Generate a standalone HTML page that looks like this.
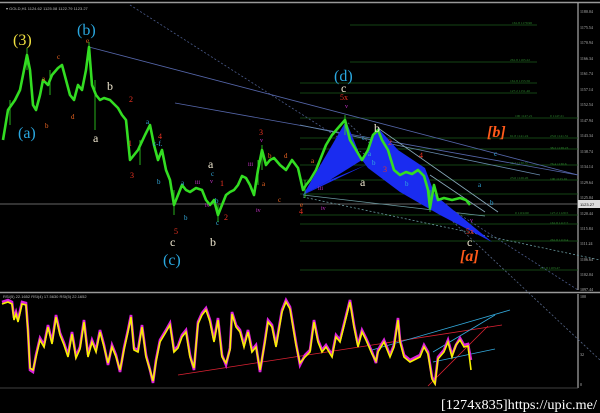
<!DOCTYPE html>
<html><head><style>
html,body{margin:0;padding:0;background:#000;width:600px;height:413px;overflow:hidden}
svg{display:block}
text{font-family:"Liberation Serif",serif}
.ax{font-family:"Liberation Sans",sans-serif;font-size:4px;fill:#bbb}
.fb{font-family:"Liberation Sans",sans-serif;font-size:3.5px;fill:#2e8b2e}
</style></head><body>
<svg width="600" height="413" viewBox="0 0 600 413" xmlns="http://www.w3.org/2000/svg">
<rect width="600" height="413" fill="#000"/>
<line x1="0" y1="2.5" x2="600" y2="2.5" stroke="#999" stroke-width="1.5"/>
<line x1="578" y1="3" x2="578" y2="290" stroke="#ccc" stroke-width="1"/>
<line x1="0" y1="292.5" x2="600" y2="292.5" stroke="#999" stroke-width="1.5"/>
<line x1="578" y1="294" x2="578" y2="388" stroke="#ccc" stroke-width="1"/>
<line x1="0" y1="388" x2="578" y2="388" stroke="#555" stroke-width="0.8"/>
<line x1="0" y1="204" x2="578" y2="204" stroke="#888" stroke-width="0.8"/>
<rect x="578" y="200" width="22" height="8" fill="#ddd"/>
<text x="580" y="206" class="ax" style="fill:#000">1123.27</text>
<text x="6" y="10" class="ax">▾ GOLD,H1  1124.62 1125.08 1122.79 1123.27</text>
<g stroke="#1d5d1d" stroke-width="0.7">
<line x1="350" y1="25" x2="537" y2="25"/><line x1="350" y1="62" x2="537" y2="62"/>
<line x1="300" y1="83" x2="537" y2="83"/><line x1="300" y1="93" x2="537" y2="93"/>
<line x1="300" y1="118" x2="578" y2="118"/><line x1="300" y1="138" x2="578" y2="138"/>
<line x1="300" y1="149" x2="578" y2="149"/><line x1="300" y1="165" x2="578" y2="165"/>
<line x1="300" y1="180" x2="578" y2="180"/><line x1="300" y1="194" x2="578" y2="194"/>
<line x1="300" y1="215" x2="578" y2="215"/><line x1="300" y1="224" x2="578" y2="224"/>
<line x1="300" y1="241" x2="578" y2="241"/><line x1="300" y1="270" x2="578" y2="270"/>
</g>
<g class="fb">
<text x="512" y="24">161.8 1179.96</text><text x="510" y="61">261.8 1165.22</text>
<text x="510" y="82">161.8 1155.56</text><text x="510" y="92">127.2 1151.46</text>
<text x="515" y="117">100 1147.21</text><text x="510" y="137">61.8 1141.24</text>
<text x="510" y="164">38.2 1130.37</text><text x="510" y="179">23.6 1126.26</text>
<text x="515" y="214">0 1119.60</text><text x="540" y="269">261.8 1103.47</text>
<text x="550" y="117">0 1147.21</text><text x="550" y="137">23.6 1141.31</text>
<text x="550" y="149">38.2 1138.23</text><text x="550" y="165">76.4 1130.6</text>
<text x="550" y="180">100 1125.91</text><text x="550" y="214">127.2 1120.5</text>
<text x="550" y="224">161.8 1117.7</text><text x="550" y="241">261.8 1110.4</text>
</g>
<g class="ax">
<text x="580" y="13">1180.04</text><text x="580" y="29">1175.54</text><text x="580" y="44">1170.94</text>
<text x="580" y="60">1166.34</text><text x="580" y="75">1161.74</text><text x="580" y="91">1157.14</text>
<text x="580" y="106">1152.54</text><text x="580" y="122">1147.94</text><text x="580" y="137">1143.34</text>
<text x="580" y="153">1138.74</text><text x="580" y="168">1134.14</text><text x="580" y="184">1129.64</text>
<text x="580" y="199">1125.04</text><text x="580" y="215">1120.44</text><text x="580" y="230">1115.84</text>
<text x="580" y="245">1111.24</text><text x="580" y="261">1106.64</text><text x="580" y="276">1102.04</text>
<text x="580" y="291">1097.44</text><text x="580" y="298">100</text><text x="580" y="356">32</text><text x="580" y="386">0</text>
</g>
<g fill="none" stroke-width="0.8">
<line x1="130" y1="5" x2="578" y2="290" stroke="#4a5a8a" stroke-dasharray="2,2"/>
<line x1="89" y1="47" x2="578" y2="175" stroke="#5566aa"/>
<line x1="175" y1="103" x2="578" y2="175" stroke="#5566aa"/>
<line x1="300" y1="125" x2="540" y2="175" stroke="#6688aa"/>
<line x1="303" y1="195" x2="485" y2="216" stroke="#6a9aa0"/>
<line x1="303" y1="197" x2="600" y2="260" stroke="#6a9aa0" stroke-dasharray="2,2"/>
<line x1="378" y1="128" x2="498" y2="212" stroke="#88aabb"/>
<line x1="345" y1="120" x2="600" y2="360" stroke="#556688" stroke-dasharray="2,2"/>
<line x1="430" y1="175" x2="485" y2="212" stroke="#88aabb"/>
</g>
<polygon points="303,195 346,121 362,160 330,180" fill="#1a2cf0"/>
<polygon points="303,195 330,180 366,165" fill="#1a2cf0"/>
<polygon points="362,160 378,128 398,150 425,168 435,195 492,242 440,215 400,192 368,168" fill="#1a2cf0"/>
<g fill="none" stroke="#33dd22" stroke-linejoin="round">
<polyline stroke-width="2.6" points="3,140 8,110 15,100 20,90 27,55 30,70 33,105 36,110 40,95 43,80 48,85 52,75 58,68 62,65 66,80 70,95 74,100 78,85 82,90 86,70 89,47 92,85 96,95 100,100 104,98 110,100 114,104 118,108 122,115 126,120 130,160 134,155 138,150 145,135 150,125 154,145 158,160 162,150 166,170 170,180 174,205 178,195 182,185 186,190 190,192 196,188 202,190 206,200 210,205 214,200 218,215 222,205 226,195 230,192 234,190 238,185 242,176 246,178 250,185 254,195 258,170 262,150 266,165 270,160 274,158 280,165 286,170 292,160 298,168 303,190 306,185 310,180 316,170 320,160 326,145 332,135 338,128 345,120 350,140 356,150 362,160 368,150 373,135 378,130 382,140 388,150 394,170 400,175 406,172 412,174 418,170 424,176 428,190 430,208 434,185 438,200 444,198 452,200 460,198 466,200 470,205"/>
</g>
<g stroke="#33dd22" stroke-width="0.8">
<line x1="27" y1="48" x2="27" y2="70"/><line x1="89" y1="42" x2="89" y2="60"/><line x1="174" y1="190" x2="174" y2="215"/><line x1="262" y1="145" x2="262" y2="170"/><line x1="430" y1="190" x2="430" y2="212"/>
<line x1="10" y1="100" x2="10" y2="125"/><line x1="50" y1="70" x2="50" y2="95"/><line x1="95" y1="80" x2="95" y2="130"/><line x1="140" y1="140" x2="140" y2="165"/><line x1="218" y1="205" x2="218" y2="222"/><line x1="258" y1="160" x2="258" y2="185"/><line x1="345" y1="115" x2="345" y2="135"/><line x1="305" y1="180" x2="305" y2="198"/>
</g>
<g font-size="16">
<text x="13" y="45" fill="#f0e040">(3)</text>
<text x="77" y="35" fill="#2aa8e0">(b)</text>
<text x="18" y="138" fill="#2aa8e0">(a)</text>
<text x="163" y="265" fill="#2aa8e0">(c)</text>
<text x="334" y="81" fill="#2aa8e0">(d)</text>
</g>
<g font-size="12">
<text x="107" y="90" fill="#f0e8d0">b</text><text x="93" y="142" fill="#f0e8d0">a</text>
<text x="208" y="168" fill="#f0e8d0">a</text><text x="170" y="246" fill="#f0e8d0">c</text>
<text x="210" y="246" fill="#f0e8d0">b</text><text x="341" y="92" fill="#f0e8d0">c</text>
<text x="374" y="132" fill="#f0e8d0">b</text><text x="360" y="186" fill="#f0e8d0">a</text>
<text x="467" y="246" fill="#f0e8d0">c</text>
</g>
<g font-size="16" font-style="italic" font-weight="bold" fill="#ff5a1a">
<text x="487" y="137">[b]</text><text x="460" y="261">[a]</text>
</g>
<g font-size="8" fill="#ee3322">
<text x="128" y="146">1</text><text x="130" y="178">3</text><text x="129" y="102">2</text>
<text x="158" y="139">4</text><text x="174" y="234">5</text><text x="220" y="186">1</text>
<text x="224" y="220">2</text><text x="259" y="135">3</text><text x="299" y="214">4</text>
<text x="340" y="100">5x</text><text x="419" y="158">4</text><text x="466" y="234">5x</text>
<text x="388" y="145">2</text><text x="383" y="172">3</text>
</g>
<g font-size="7" fill="#ee6622">
<text x="42" y="81">a</text><text x="57" y="59">c</text><text x="45" y="128">b</text>
<text x="71" y="119">d</text><text x="86" y="43">e</text><text x="268" y="158">b</text>
<text x="284" y="158">d</text><text x="262" y="186">a</text><text x="278" y="202">c</text>
<text x="300" y="207">e</text><text x="311" y="163">a</text>
</g>
<g font-size="7" fill="#33aadd">
<text x="146" y="124">a</text><text x="153" y="146">c-f.</text><text x="157" y="184">b</text>
<text x="181" y="185">a</text><text x="184" y="220">b</text><text x="211" y="176">c</text>
<text x="215" y="203">b</text><text x="216" y="225">c</text><text x="368" y="156">a</text>
<text x="494" y="156">c</text><text x="478" y="187">a</text><text x="490" y="205">b</text>
<text x="362" y="140">c</text><text x="372" y="165">b</text><text x="405" y="186">b</text>
</g>
<g font-size="6" fill="#cc33cc">
<text x="195" y="184">iii</text><text x="210" y="183">v</text><text x="205" y="207">iv</text>
<text x="248" y="166">iii</text><text x="256" y="212">iv</text><text x="318" y="190">iii</text>
<text x="321" y="210">iv</text><text x="345" y="108">v</text><text x="260" y="142">v</text>
<text x="470" y="222">v</text>
</g>
<text x="3" y="298" class="ax">RSI(5) 22.1652  RSI(4) 17.5630  RSI(5) 22.1652</text>
<g fill="none" stroke-width="0.8">
<line x1="178" y1="375" x2="502" y2="325" stroke="#dd2233"/>
<line x1="428" y1="386" x2="488" y2="326" stroke="#dd2233"/>
<line x1="433" y1="352" x2="495" y2="315" stroke="#33aadd"/>
<line x1="372" y1="350" x2="510" y2="310" stroke="#33aadd"/>
<line x1="433" y1="362" x2="495" y2="349" stroke="#33aadd"/>
</g>
<polyline fill="none" stroke="#dd22dd" stroke-width="2.6" points="2,302 8,300 12,302 14,318 16,312 18,320 22,302 26,303 28,330 30,370 33,372 36,355 40,338 44,345 48,325 52,342 56,315 60,333 64,343 68,355 72,332 76,356 80,347 84,320 88,355 92,340 96,350 100,330 104,345 108,365 112,345 116,355 120,372 124,348 128,330 131,315 134,348 138,350 142,325 146,355 150,370 153,383 156,360 160,340 166,330 170,323 174,350 178,346 182,335 186,330 190,355 194,370 198,322 202,313 206,308 210,320 214,340 218,318 222,355 226,365 230,348 232,312 236,325 240,330 244,345 248,330 252,350 256,345 260,372 265,340 268,320 272,325 276,345 282,310 286,300 290,307 296,343 300,365 305,355 310,350 314,320 318,340 322,350 326,345 332,355 336,335 340,340 345,320 350,300 354,325 358,345 362,330 366,338 372,352 376,363 378,350 384,340 390,355 394,345 398,318 400,340 404,355 410,360 414,358 420,355 424,345 428,352 432,377 435,382 438,357 444,350 448,340 452,355 456,345 460,338 464,345 468,344 471,360"/>
<polyline fill="none" stroke="#f7f000" stroke-width="1.6" points="2,304 8,302 12,304 14,320 16,314 18,322 22,304 26,305 28,332 30,368 33,370 36,357 40,340 44,347 48,327 52,344 56,317 60,335 64,345 68,357 72,334 76,358 80,349 84,322 88,357 92,342 96,352 100,332 104,347 108,363 112,347 116,357 120,370 124,350 128,332 131,317 134,350 138,352 142,327 146,357 150,370 153,381 156,362 160,342 166,332 170,325 174,352 178,348 182,337 186,332 190,357 194,368 198,324 202,315 206,310 210,322 214,342 218,320 222,357 226,363 230,350 232,314 236,327 240,332 244,347 248,332 252,352 256,347 260,370 265,342 268,322 272,327 276,347 282,312 286,302 290,309 296,345 300,363 305,357 310,352 314,322 318,342 322,352 326,347 332,357 336,337 340,342 345,322 350,302 354,327 358,347 362,332 366,340 372,354 376,361 378,352 384,342 390,357 394,347 398,320 400,342 404,357 410,362 414,360 420,357 424,347 428,354 432,379 435,384 438,359 444,352 448,342 452,357 456,345 460,340 464,347 468,346 471,370"/>
<text x="441" y="409" font-family="Liberation Sans,sans-serif" font-size="14" fill="#fff" textLength="156" lengthAdjust="spacingAndGlyphs">[1274x835]https://upic.me/</text>
</svg>
</body></html>
